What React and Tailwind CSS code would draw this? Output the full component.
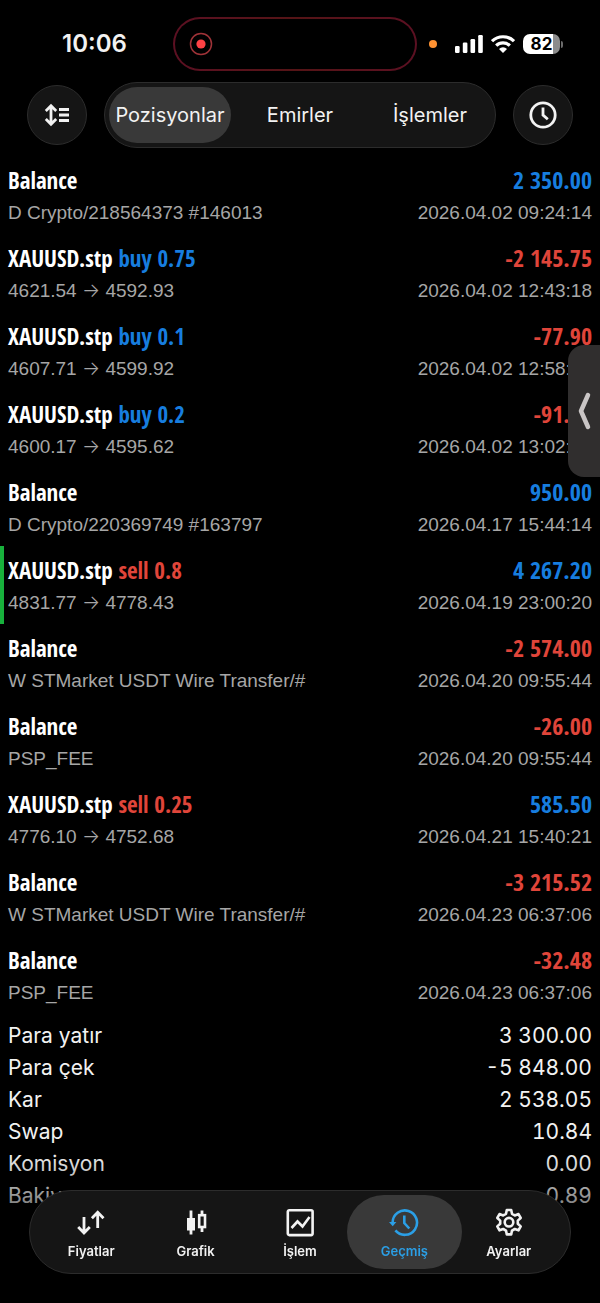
import { useState } from "react";

const history = [
  { title: "Balance", amount: "2 350.00", note: "D Crypto/218564373 #146013", date: "2026.04.02 09:24:14" },
  { title: "XAUUSD.stp", side: "buy", lots: "0.75", amount: "-2 145.75", from: "4621.54", to: "4592.93", date: "2026.04.02 12:43:18" },
  { title: "XAUUSD.stp", side: "buy", lots: "0.1", amount: "-77.90", from: "4607.71", to: "4599.92", date: "2026.04.02 12:58:20" },
  { title: "XAUUSD.stp", side: "buy", lots: "0.2", amount: "-91.00", from: "4600.17", to: "4595.62", date: "2026.04.02 13:02:10" },
  { title: "Balance", amount: "950.00", note: "D Crypto/220369749 #163797", date: "2026.04.17 15:44:14" },
  { title: "XAUUSD.stp", side: "sell", lots: "0.8", amount: "4 267.20", from: "4831.77", to: "4778.43", date: "2026.04.19 23:00:20", marked: true },
  { title: "Balance", amount: "-2 574.00", note: "W STMarket USDT Wire Transfer/#", date: "2026.04.20 09:55:44" },
  { title: "Balance", amount: "-26.00", note: "PSP_FEE", date: "2026.04.20 09:55:44" },
  { title: "XAUUSD.stp", side: "sell", lots: "0.25", amount: "585.50", from: "4776.10", to: "4752.68", date: "2026.04.21 15:40:21" },
  { title: "Balance", amount: "-3 215.52", note: "W STMarket USDT Wire Transfer/#", date: "2026.04.23 06:37:06" },
  { title: "Balance", amount: "-32.48", note: "PSP_FEE", date: "2026.04.23 06:37:06" },
];

const summary = [
  ["Para yatır", "3 300.00"],
  ["Para çek", "-5 848.00"],
  ["Kar", "2 538.05"],
  ["Swap", "10.84"],
  ["Komisyon", "0.00"],
  ["Bakiye", "0.89"],
];

const tabs = ["Pozisyonlar", "Emirler", "İşlemler"];

function PricesIcon() {
  return (
    <svg viewBox="0 0 30 30" className="size-[30px]" fill="none" stroke="currentColor" strokeWidth="2.8">
      <path d="M8 10v16M2.200 20 8 26l5.800-6M21.700 21V5.500M15.900 11.300l5.800-6 5.800 6" />
    </svg>
  );
}

function ChartIcon() {
  return (
    <svg viewBox="0 0 30 30" className="size-[30px]" fill="none" stroke="currentColor" strokeWidth="2.8">
      <path d="M10 3.500v24M21 3.500v4.500M21 20.500v4.500" />
      <rect x="6" y="11" width="8" height="12.500" fill="currentColor" stroke="none" />
      <rect x="18.200" y="8.200" width="5.800" height="11.800" strokeWidth="2.6" />
    </svg>
  );
}

function TradeIcon() {
  return (
    <svg viewBox="0 0 30 30" className="size-[30px]" fill="none" stroke="currentColor" strokeWidth="2.6">
      <rect x="2.800" y="3.300" width="24.800" height="24.800" rx="1.500" />
      <path d="m6.500 21 6-6.500 5 5L24.500 10" />
    </svg>
  );
}

function HistoryIcon() {
  return (
    <svg viewBox="0 0 30 30" className="size-[30px]" fill="none" stroke="currentColor" strokeWidth="2.6">
      <path d="M3.600 15.500A12.200 12.200 0 1 1 6.400 23.400" />
      <path d="M0 15h7.400l-3.700 4.200z" fill="currentColor" stroke="none" />
      <path d="M15.300 8.500v7.500l5 5.500" />
    </svg>
  );
}

function SettingsIcon() {
  return (
    <svg viewBox="0 0 30 30" className="size-[30px]" fill="none" stroke="currentColor" strokeWidth="2.6" strokeLinejoin="round">
      <path d="M12.800 3h4.400l.8 3.800 2.800 1.600 3.700-1.300 2.200 3.900-2.900 2.600v3.200l2.900 2.600-2.200 3.900-3.700-1.300-2.800 1.600-.8 3.800h-4.400l-.8-3.800-2.800-1.600-3.700 1.300-2.200-3.900 2.900-2.600v-3.200L3.300 11l2.200-3.900 3.700 1.300L12 6.800z" />
      <circle cx="15" cy="15.200" r="4.300" />
    </svg>
  );
}

const navItems = [
  { label: "Fiyatlar", Icon: PricesIcon },
  { label: "Grafik", Icon: ChartIcon },
  { label: "İşlem", Icon: TradeIcon },
  { label: "Geçmiş", Icon: HistoryIcon },
  { label: "Ayarlar", Icon: SettingsIcon },
];

function StatusBar() {
  return (
    <div className="grid grid-cols-[173fr_244fr_183fr] items-center pt-[17px]">
      <span className="pl-[62px] text-[24px] leading-[54px] font-semibold">10:06</span>
      <div className="rounded-full bg-linear-to-r from-[#5c1022] via-[#551416] to-[#5c1022] p-[2px]">
        <div className="flex h-[50px] items-center rounded-full bg-black pl-[14px]">
          <svg viewBox="0 0 24 24" className="size-6">
            <circle cx="12" cy="12" r="10.500" fill="none" stroke="#a03338" strokeWidth="1.500" />
            <circle cx="12" cy="12" r="4.600" fill="#ff4245" />
          </svg>
        </div>
      </div>
      <div className="flex items-center pl-3">
        <span className="size-2 rounded-full bg-[#ff9232]" />
        <svg viewBox="0 0 28 18" className="ml-[18px] h-[18px] w-7" fill="#fff">
          <rect x="0" y="11" width="4.600" height="7" rx="1.200" />
          <rect x="7.800" y="7.500" width="4.600" height="10.500" rx="1.200" />
          <rect x="15.500" y="4" width="4.600" height="14" rx="1.200" />
          <rect x="23.200" y="0" width="4.600" height="18" rx="1.200" />
        </svg>
        <svg viewBox="0 0 24 18" className="ml-2 h-[18px] w-6" fill="none" stroke="#fff" strokeWidth="3.200">
          <path d="M1 6.200a15.800 15.800 0 0 1 22 0" />
          <path d="M5.200 10.600a9.700 9.700 0 0 1 13.600 0" />
          <path d="M12 18 8 14a5.700 5.700 0 0 1 8 0z" fill="#fff" stroke="none" />
        </svg>
        <div className="ml-2 flex h-5 w-[37px] items-center justify-center rounded-[7px] bg-linear-to-r from-white from-80% to-[#8c8c8c] to-80% text-[17px] leading-none font-bold text-black">
          82
        </div>
        <span className="ml-px h-[7px] w-[2px] rounded-r-full bg-[#6b6b6b]" />
      </div>
    </div>
  );
}

function Toolbar() {
  const [tab, setTab] = useState("Pozisyonlar");

  return (
    <div className="flex items-center gap-[17px] px-[27px] pt-[11px]">
      <button
        type="button"
        aria-label="Sırala"
        className="flex size-[60px] shrink-0 items-center justify-center rounded-full border border-[#2c2c2c] bg-[#151515]"
      >
        <svg viewBox="0 0 26 24" className="h-6 w-[26px]" fill="none" stroke="currentColor" strokeWidth="2.800">
          <path d="M7 3.500v17M1.800 8 7 2.800 12.200 8M1.800 16 7 21.200l5.200-5.200" />
          <path d="M15 6.500h10M15 12h10M15 17.500h10" />
        </svg>
      </button>
      <div className="grid h-[66px] flex-1 grid-cols-3 rounded-full border border-[#2c2c2c] bg-[#151515] py-1">
        {tabs.map((t) => (
          <button
            key={t}
            type="button"
            onClick={() => setTab(t)}
            className={t === tab ? "mx-1 rounded-full bg-[#393939] text-[20px]" : "mx-1 rounded-full text-[20px]"}
          >
            {t}
          </button>
        ))}
      </div>
      <button
        type="button"
        aria-label="Dönem"
        className="flex size-[60px] shrink-0 items-center justify-center rounded-full border border-[#2c2c2c] bg-[#151515]"
      >
        <svg viewBox="0 0 28 28" className="size-7" fill="none" stroke="currentColor" strokeWidth="2.800">
          <circle cx="14" cy="14" r="12.200" />
          <path d="M14 6.500V14l4.800 4.200" />
        </svg>
      </button>
    </div>
  );
}

function HistoryRow({ item }) {
  const negative = item.amount.startsWith("-");

  return (
    <li className={item.marked ? "h-[78px] border-l-4 border-[#18b13c] pt-2 pr-2 pl-1" : "h-[78px] px-2 pt-2"}>
      <div className="flex justify-between font-['Open_Sans_Condensed',sans-serif] text-[23px] leading-8 font-bold text-white">
        <span>
          {item.title}
          {item.side && (
            <span className={item.side === "buy" ? "text-[#177ddf]" : "text-[#e0453a]"}>
              {" "}
              {item.side} {item.lots}
            </span>
          )}
        </span>
        <span className={negative ? "text-[24px] text-[#e0453a]" : "text-[24px] text-[#177ddf]"}>{item.amount}</span>
      </div>
      <div className="flex justify-between font-['Liberation_Sans',sans-serif] text-[19px] leading-[34px] text-[#a6a6a6]">
        {item.note ? (
          <span>{item.note}</span>
        ) : (
          <span>
            {item.from} <span className="font-[Inter,sans-serif] font-light">→</span> {item.to}
          </span>
        )}
        <span>{item.date}</span>
      </div>
    </li>
  );
}

export default function App() {
  const [page, setPage] = useState("Geçmiş");

  return (
    <div className="relative min-h-screen bg-black font-[Inter,sans-serif] text-[#f2f2f2]">
      <StatusBar />
      <Toolbar />

      <ul className="pt-2">
        {history.map((item, i) => (
          <HistoryRow key={i} item={item} />
        ))}
      </ul>

      <dl className="px-2 pt-[6px] pb-[89px]">
        {summary.map(([label, value]) => (
          <div key={label} className="flex justify-between text-[21px] leading-8">
            <dt>{label}</dt>
            <dd className="tabular-nums">{value}</dd>
          </div>
        ))}
      </dl>

      {/* side panel handle */}
      <button
        type="button"
        aria-label="Paneli aç"
        className="absolute top-[345px] right-0 flex h-[132px] w-8 items-center justify-center rounded-l-2xl bg-[#302e2e]"
      >
        <svg viewBox="0 0 14 38" className="h-[38px] w-[14px]" fill="none" stroke="#c9c5c5" strokeWidth="4.500" strokeLinecap="round" strokeLinejoin="round">
          <path d="M11 3 4 19l7 16" />
        </svg>
      </button>

      {/* content fades out behind the tab bar */}
      <div className="pointer-events-none fixed inset-x-0 bottom-0 h-[150px] bg-linear-to-b from-transparent to-black to-75%" />

      <nav className="fixed inset-x-[29px] bottom-[29px] grid h-[84px] grid-cols-5 rounded-full border border-[#2c2c2c] bg-[#151515] px-[9px] py-1">
        {navItems.map(({ label, Icon }) => (
          <button
            key={label}
            type="button"
            onClick={() => setPage(label)}
            className={
              label === page
                ? "-mx-[5px] flex flex-col items-center rounded-full bg-[#393939] pt-3 text-[13px] leading-7 font-semibold text-[#2b9fe6]"
                : "flex flex-col items-center pt-3 text-[13px] leading-7 font-semibold"
            }
          >
            <Icon />
            {label}
          </button>
        ))}
      </nav>
    </div>
  );
}
